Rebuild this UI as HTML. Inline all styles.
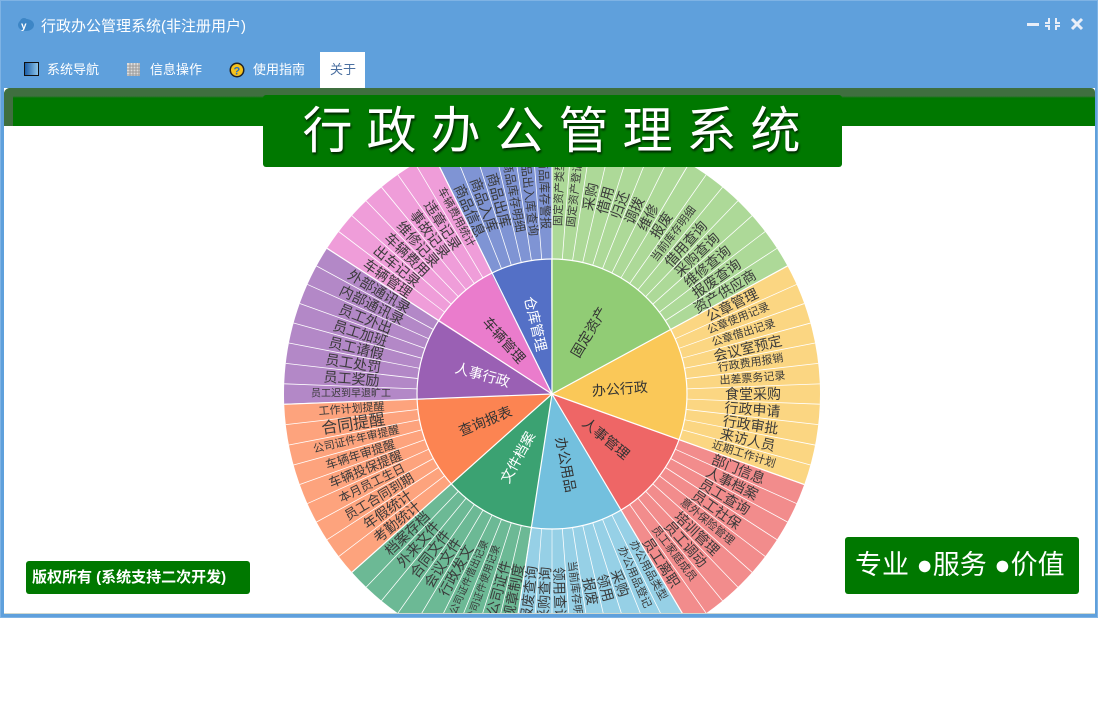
<!DOCTYPE html>
<html><head><meta charset="utf-8"><style>
*{margin:0;padding:0;box-sizing:border-box}
body{width:1098px;height:728px;background:#fff;position:relative;overflow:hidden;font-family:"Liberation Sans","Noto Sans CJK SC",sans-serif}
#win{position:absolute;left:0;top:0;width:1098px;height:618px;background:#5fa0dc;border:1px solid #7fb3e4}
#title{position:absolute;left:40px;top:14px;color:#fff;font-size:15px}
#tabs span{position:absolute;top:58px;font-size:13px;color:#fff}
#content{position:absolute;left:3px;top:87px;width:1091px;height:526px;background:#fff;overflow:hidden;border-bottom:1px solid #cfd8cf}
#bar{position:absolute;left:0;top:0;width:1091px;height:38px;background:linear-gradient(#3f6f3f 0,#3f6f3f 8px,#007800 10px,#007800);border-radius:6px 4px 0 0}
#bar:before{content:"";position:absolute;left:0;top:0;width:9px;height:38px;background:#3f6f3f;border-radius:6px 0 0 0}
#banner{position:absolute;left:259px;top:7px;width:579px;height:72px;background:#007800;border-radius:3px;color:#fff;font-size:50px;letter-spacing:14px;text-align:center;line-height:72px;text-shadow:1px 2px 2px rgba(0,0,0,.7);padding-left:12px}
.badge{position:absolute;background:#007800;color:#fff;border-radius:3px}
</style></head><body>
<div id="win">
<svg style="position:absolute;left:16px;top:15px" width="18" height="16" viewBox="0 0 18 16"><ellipse cx="9" cy="9" rx="8" ry="6" fill="#3d86c6"/><ellipse cx="7" cy="6" rx="4" ry="4" fill="#3d86c6"/><text x="4" y="13" font-size="10" fill="#fff" font-weight="bold">y</text></svg>
<div id="title">行政办公管理系统(非注册用户)</div>
<svg style="position:absolute;left:1024px;top:16px" width="62" height="14"><rect x="2" y="6" width="12" height="3" fill="#e8eef8"/><g fill="#e8eef8"><rect x="23" y="1" width="2" height="5"/><rect x="20" y="5" width="5" height="2"/><rect x="30" y="1" width="2" height="5"/><rect x="30" y="5" width="5" height="2"/><rect x="23" y="8" width="2" height="5"/><rect x="20" y="8" width="5" height="2"/><rect x="30" y="8" width="2" height="5"/><rect x="30" y="8" width="5" height="2"/></g><path d="M47 2 L57 12 M57 2 L47 12" stroke="#e8eef8" stroke-width="3"/></svg>
<div id="tabs">
<div style="position:absolute;left:23px;top:61px;width:15px;height:14px;border:1px solid #111;background:linear-gradient(90deg,#1c5fa8,#8cc4ea)"></div>
<span style="left:46px">系统导航</span>
<svg style="position:absolute;left:126px;top:62px" width="13" height="13"><rect width="13" height="13" fill="#ddd"/><path d="M3 0V13M6 0V13M9 0V13M12 0V13M0 3H13M0 6H13M0 9H13M0 12H13" stroke="#999" stroke-width="1"/></svg>
<span style="left:149px">信息操作</span>
<svg style="position:absolute;left:228px;top:61px" width="16" height="16"><circle cx="8" cy="8" r="7.5" fill="#222"/><circle cx="8" cy="8" r="6" fill="#f6c21c"/><text x="4.5" y="12.5" font-size="11" font-weight="bold" fill="#2a6fc0">?</text></svg>
<span style="left:252px">使用指南</span>
<div style="position:absolute;left:319px;top:51px;width:45px;height:36px;background:#fff"></div>
<span style="left:329px;color:#4a6fa0">关于</span>
</div>
<div id="content">
<div id="bar"></div>
<svg style="position:absolute;left:-3px;top:-87px" width="1098" height="728">
<g transform="translate(551 393) rotate(-90)">
<g fill="none">
<circle r="201.5" stroke-width="133" stroke="#91cc75" stroke-opacity=".75" pathLength="82" stroke-dasharray="14 68" stroke-dashoffset="0"/>
<circle r="201.5" stroke-width="133" stroke="#fac858" stroke-opacity=".75" pathLength="82" stroke-dasharray="11 71" stroke-dashoffset="-14"/>
<circle r="201.5" stroke-width="133" stroke="#ee6666" stroke-opacity=".75" pathLength="82" stroke-dasharray="9 73" stroke-dashoffset="-25"/>
<circle r="201.5" stroke-width="133" stroke="#73c0de" stroke-opacity=".75" pathLength="82" stroke-dasharray="9 73" stroke-dashoffset="-34"/>
<circle r="201.5" stroke-width="133" stroke="#3ba272" stroke-opacity=".75" pathLength="82" stroke-dasharray="9 73" stroke-dashoffset="-43"/>
<circle r="201.5" stroke-width="133" stroke="#fc8452" stroke-opacity=".75" pathLength="82" stroke-dasharray="9 73" stroke-dashoffset="-52"/>
<circle r="201.5" stroke-width="133" stroke="#9a60b4" stroke-opacity=".75" pathLength="82" stroke-dasharray="8 74" stroke-dashoffset="-61"/>
<circle r="201.5" stroke-width="133" stroke="#ea7ccc" stroke-opacity=".75" pathLength="82" stroke-dasharray="7 75" stroke-dashoffset="-69"/>
<circle r="201.5" stroke-width="133" stroke="#5470c6" stroke-opacity=".75" pathLength="82" stroke-dasharray="6 76" stroke-dashoffset="-76"/>
<circle r="201.5" stroke-width="133" stroke="#fff" pathLength="82" stroke-dasharray="0.05 0.95" stroke-dashoffset="0.025"/>
<circle r="67.5" stroke-width="135" stroke="#91cc75" pathLength="82" stroke-dasharray="14 68" stroke-dashoffset="0"/>
<circle r="67.5" stroke-width="135" stroke="#fac858" pathLength="82" stroke-dasharray="11 71" stroke-dashoffset="-14"/>
<circle r="67.5" stroke-width="135" stroke="#ee6666" pathLength="82" stroke-dasharray="9 73" stroke-dashoffset="-25"/>
<circle r="67.5" stroke-width="135" stroke="#73c0de" pathLength="82" stroke-dasharray="9 73" stroke-dashoffset="-34"/>
<circle r="67.5" stroke-width="135" stroke="#3ba272" pathLength="82" stroke-dasharray="9 73" stroke-dashoffset="-43"/>
<circle r="67.5" stroke-width="135" stroke="#fc8452" pathLength="82" stroke-dasharray="9 73" stroke-dashoffset="-52"/>
<circle r="67.5" stroke-width="135" stroke="#9a60b4" pathLength="82" stroke-dasharray="8 74" stroke-dashoffset="-61"/>
<circle r="67.5" stroke-width="135" stroke="#ea7ccc" pathLength="82" stroke-dasharray="7 75" stroke-dashoffset="-69"/>
<circle r="67.5" stroke-width="135" stroke="#5470c6" pathLength="82" stroke-dasharray="6 76" stroke-dashoffset="-76"/>
<circle r="135" stroke="#fff" stroke-width="1.2"/>
</g>
<g stroke="#fff" stroke-width="1.2">
<line x2="268" transform="rotate(0)"/><line x2="268" transform="rotate(61.46)"/><line x2="268" transform="rotate(109.76)"/><line x2="268" transform="rotate(149.27)"/><line x2="268" transform="rotate(188.78)"/><line x2="268" transform="rotate(228.29)"/><line x2="268" transform="rotate(267.80)"/><line x2="268" transform="rotate(302.93)"/><line x2="268" transform="rotate(333.66)"/>
</g>
<g font-size="14" text-anchor="middle" dominant-baseline="central" fill="#333">
<text transform="rotate(30.73)" x="72">固定资产</text>
<text transform="rotate(85.61)" x="68">办公行政</text>
<text transform="rotate(129.5)" x="70">人事管理</text>
<text transform="rotate(169.0)" x="72">办公用品</text>
<text transform="rotate(388.5)" x="-72" fill="#fff">文件档案</text>
<text transform="rotate(428.0)" x="-72">查询报表</text>
<text transform="rotate(465.4)" x="-72" fill="#fff">人事行政</text>
<text transform="rotate(498.3)" x="-72">车辆管理</text>
<text transform="rotate(526.8)" x="-72" fill="#fff">仓库管理</text>
</g>
<g text-anchor="middle" dominant-baseline="central" fill="#3a3a3a" font-size="14">
<text transform="rotate(2.20)" x="201" font-size="11">固定资产类型</text>
<text transform="rotate(6.59)" x="201" font-size="11">固定资产登记</text>
<text transform="rotate(10.98)" x="201">采购</text>
<text transform="rotate(15.37)" x="201">借用</text>
<text transform="rotate(19.76)" x="201">归还</text>
<text transform="rotate(24.15)" x="201">调拨</text>
<text transform="rotate(28.54)" x="201">维修</text>
<text transform="rotate(32.93)" x="201">报废</text>
<text transform="rotate(37.32)" x="201" font-size="11">当前库存明细</text>
<text transform="rotate(41.71)" x="201">借用查询</text>
<text transform="rotate(46.10)" x="201">采购查询</text>
<text transform="rotate(50.49)" x="201">维修查询</text>
<text transform="rotate(54.88)" x="201">报废查询</text>
<text transform="rotate(59.27)" x="201">资产供应商</text>
<text transform="rotate(63.66)" x="201">公章管理</text>
<text transform="rotate(68.05)" x="201" font-size="11">公章使用记录</text>
<text transform="rotate(72.44)" x="201" font-size="11">公章借出记录</text>
<text transform="rotate(76.83)" x="201">会议室预定</text>
<text transform="rotate(81.22)" x="201" font-size="11">行政费用报销</text>
<text transform="rotate(85.61)" x="201" font-size="11">出差票务记录</text>
<text transform="rotate(90.00)" x="201">食堂采购</text>
<text transform="rotate(94.39)" x="201">行政申请</text>
<text transform="rotate(98.78)" x="201">行政审批</text>
<text transform="rotate(103.17)" x="201">来访人员</text>
<text transform="rotate(107.56)" x="201" font-size="11">近期工作计划</text>
<text transform="rotate(111.95)" x="201">部门信息</text>
<text transform="rotate(116.34)" x="201">人事档案</text>
<text transform="rotate(120.73)" x="201">员工查询</text>
<text transform="rotate(125.12)" x="201">员工社保</text>
<text transform="rotate(129.51)" x="201" font-size="11">意外保险管理</text>
<text transform="rotate(133.90)" x="201">培训管理</text>
<text transform="rotate(138.29)" x="201">员工调动</text>
<text transform="rotate(142.68)" x="201" font-size="11">员工家庭成员</text>
<text transform="rotate(147.07)" x="201">员工离职</text>
<text transform="rotate(151.46)" x="201" font-size="11">办公用品类型</text>
<text transform="rotate(155.85)" x="201" font-size="11">办公用品登记</text>
<text transform="rotate(160.24)" x="201">采购</text>
<text transform="rotate(164.63)" x="201">领用</text>
<text transform="rotate(169.02)" x="201">报废</text>
<text transform="rotate(173.41)" x="201" font-size="11">当前库存明细</text>
<text transform="rotate(177.80)" x="201">领用查询</text>
<text transform="rotate(362.20)" x="-201">采购查询</text>
<text transform="rotate(366.59)" x="-201">报废查询</text>
<text transform="rotate(370.98)" x="-201">规章制度</text>
<text transform="rotate(375.37)" x="-201">公司证件</text>
<text transform="rotate(379.76)" x="-201" font-size="10">公司证件使用记录</text>
<text transform="rotate(384.15)" x="-201" font-size="10">公司证件借出记录</text>
<text transform="rotate(388.54)" x="-201">行政发文</text>
<text transform="rotate(392.93)" x="-201">会议文件</text>
<text transform="rotate(397.32)" x="-201">合同文件</text>
<text transform="rotate(401.71)" x="-201">外来文件</text>
<text transform="rotate(406.10)" x="-201">档案存档</text>
<text transform="rotate(410.49)" x="-201">考勤统计</text>
<text transform="rotate(414.88)" x="-201">年假统计</text>
<text transform="rotate(419.27)" x="-201" font-size="13">员工合同到期</text>
<text transform="rotate(423.66)" x="-201" font-size="12">本月员工生日</text>
<text transform="rotate(428.05)" x="-201" font-size="13">车辆投保提醒</text>
<text transform="rotate(432.44)" x="-201" font-size="12">车辆年审提醒</text>
<text transform="rotate(436.83)" x="-201" font-size="11">公司证件年审提醒</text>
<text transform="rotate(441.22)" x="-201" font-size="16">合同提醒</text>
<text transform="rotate(445.61)" x="-201" font-size="11">工作计划提醒</text>
<text transform="rotate(450.00)" x="-201" font-size="10">员工迟到早退旷工</text>
<text transform="rotate(454.39)" x="-201">员工奖励</text>
<text transform="rotate(458.78)" x="-201">员工处罚</text>
<text transform="rotate(463.17)" x="-201">员工请假</text>
<text transform="rotate(467.56)" x="-201">员工加班</text>
<text transform="rotate(471.95)" x="-201">员工外出</text>
<text transform="rotate(476.34)" x="-201">内部通讯录</text>
<text transform="rotate(480.73)" x="-201">外部通讯录</text>
<text transform="rotate(485.12)" x="-201">车辆管理</text>
<text transform="rotate(489.51)" x="-201">出车记录</text>
<text transform="rotate(493.90)" x="-201">车辆费用</text>
<text transform="rotate(498.29)" x="-201">维修记录</text>
<text transform="rotate(502.68)" x="-201">事故记录</text>
<text transform="rotate(507.07)" x="-201">违章记录</text>
<text transform="rotate(511.46)" x="-201" font-size="11">车辆费用统计</text>
<text transform="rotate(515.85)" x="-201">商品信息</text>
<text transform="rotate(520.24)" x="-201">商品入库</text>
<text transform="rotate(524.63)" x="-201">商品出库</text>
<text transform="rotate(529.02)" x="-201" font-size="12">商品库存明细</text>
<text transform="rotate(533.41)" x="-201" font-size="12">商品出入库查询</text>
<text transform="rotate(537.80)" x="-201" font-size="12">商品库存警报</text>
</g>
</g>
</svg>
<div id="banner">行政办公管理系统</div>
<div class="badge" style="left:22px;top:473px;width:224px;height:33px;font-size:15px;line-height:33px;padding-left:6px;font-weight:bold">版权所有 (系统支持二次开发)</div>
<div class="badge" style="left:841px;top:449px;width:234px;height:57px;font-size:27px;line-height:57px;padding-left:10px">专业 ●服务 ●价值</div>
</div>
</div>
</body></html>
